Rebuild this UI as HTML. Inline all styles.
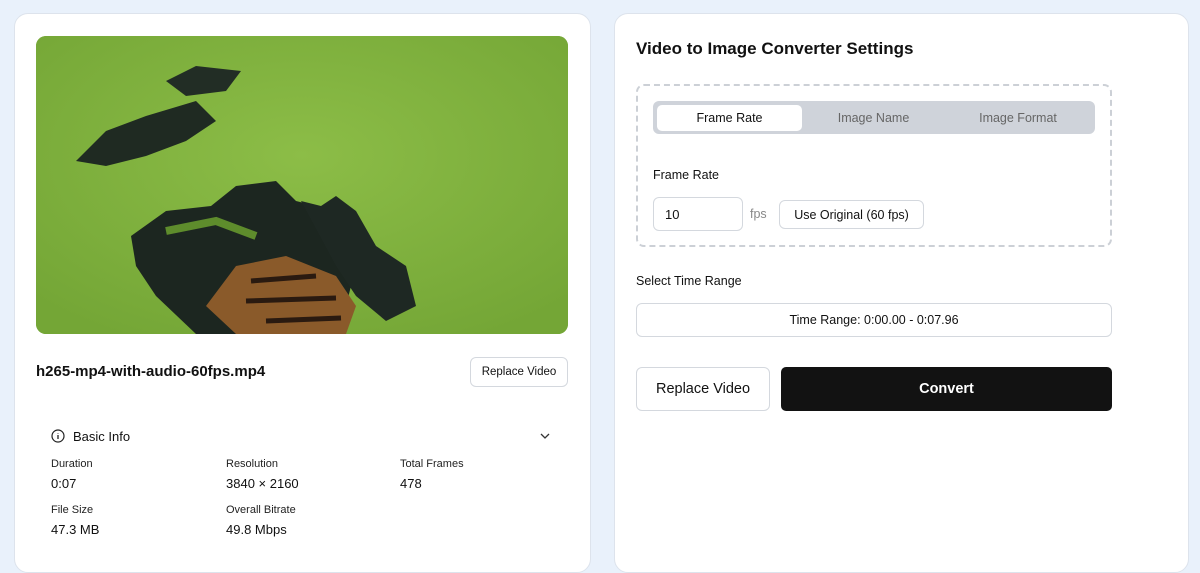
<!DOCTYPE html>
<html><head><meta charset="utf-8"><style>
*{box-sizing:border-box;margin:0;padding:0}
body{width:1200px;height:550px;overflow:hidden;background:#e9f1fb;font-family:"Liberation Sans",sans-serif;color:#111;position:relative}
.card{position:absolute;background:#fff;border:1px solid #dde3ec;border-radius:14px}
.abs{position:absolute}
.btn{position:absolute;background:#fff;border:1px solid #d4d8de;border-radius:6px;display:flex;align-items:center;justify-content:center;font-size:13px}
.lbl{font-size:11px;color:#222}
.val{font-size:13px;color:#111}
</style></head><body>
<div class="card" style="left:14px;top:13px;width:577px;height:560px"></div>
<div class="card" style="left:614px;top:13px;width:575px;height:560px"></div>

<div class="abs" style="left:36px;top:36px;width:532px;height:298px;border-radius:10px;overflow:hidden;background:#79a83a">
<svg width="532" height="298" viewBox="0 0 532 298">
<defs><radialGradient id="g" cx="50%" cy="40%" r="70%"><stop offset="0" stop-color="#8cbd47"/><stop offset="1" stop-color="#74a636"/></radialGradient></defs>
<rect width="532" height="298" fill="url(#g)"/>
<path d="M40 125 L70 95 L110 80 L160 65 L180 85 L150 105 L110 120 L70 130 Z" fill="#1f2a22"/>
<path d="M130 45 L160 30 L205 35 L190 55 L150 60 Z" fill="#222d25"/>
<path d="M95 200 L130 175 L175 170 L200 150 L240 145 L260 165 L300 175 L285 200 L320 230 L310 270 L290 298 L160 298 L120 260 L100 230 Z" fill="#1c2620"/>
<path d="M265 165 L285 170 L300 160 L320 175 L340 210 L370 230 L380 270 L350 285 L320 260 L300 230 Z" fill="#1e2823"/>
<path d="M200 230 L250 220 L300 240 L320 270 L310 298 L200 298 L170 270 Z" fill="#8a5a2a"/>
<path d="M215 245 L280 240 M210 265 L300 262 M230 285 L305 282" stroke="#2a1a10" stroke-width="5"/>
<path d="M130 195 L180 185 L220 200" stroke="#5e8c2c" stroke-width="8" fill="none"/>
</svg></div>

<div class="abs" style="left:36px;top:363px;font-size:15px;font-weight:bold">h265-mp4-with-audio-60fps.mp4</div>
<div class="btn" style="left:470px;top:357px;width:98px;height:30px;font-size:11.5px">Replace Video</div>

<svg class="abs" style="left:51px;top:429px" width="14" height="14" viewBox="0 0 14 14"><circle cx="7" cy="7" r="6" fill="none" stroke="#222" stroke-width="1.2"/><path d="M7 6v4M7 4v.5" stroke="#222" stroke-width="1.3"/></svg>
<div class="abs" style="left:73px;top:429px;font-size:13px">Basic Info</div>
<svg class="abs" style="left:540px;top:432px" width="10" height="8" viewBox="0 0 10 8"><path d="M1 2l4 4 4-4" fill="none" stroke="#333" stroke-width="1.3"/></svg>

<div class="abs lbl" style="left:51px;top:458px">Duration</div>
<div class="abs val" style="left:51px;top:476px">0:07</div>
<div class="abs lbl" style="left:226px;top:458px">Resolution</div>
<div class="abs val" style="left:226px;top:476px">3840 × 2160</div>
<div class="abs lbl" style="left:400px;top:458px">Total Frames</div>
<div class="abs val" style="left:400px;top:476px">478</div>
<div class="abs lbl" style="left:51px;top:504px">File Size</div>
<div class="abs val" style="left:51px;top:522px">47.3 MB</div>
<div class="abs lbl" style="left:226px;top:504px">Overall Bitrate</div>
<div class="abs val" style="left:226px;top:522px">49.8 Mbps</div>

<div class="abs" style="left:636px;top:39px;font-size:17px;font-weight:bold">Video to Image Converter Settings</div>
<div class="abs" style="left:636px;top:84px;width:476px;height:163px;border:2px dashed #ccd0d6;border-radius:8px"></div>
<div class="abs" style="left:653px;top:101px;width:442px;height:33px;background:#cfd3da;border-radius:6px"></div>
<div class="abs" style="left:657px;top:105px;width:145px;height:26px;background:#fff;border-radius:5px;display:flex;align-items:center;justify-content:center;font-size:12.5px">Frame Rate</div>
<div class="abs" style="left:802px;top:105px;width:143px;height:26px;display:flex;align-items:center;justify-content:center;font-size:12.5px;color:#666">Image Name</div>
<div class="abs" style="left:945px;top:105px;width:146px;height:26px;display:flex;align-items:center;justify-content:center;font-size:12.5px;color:#666">Image Format</div>

<div class="abs" style="left:653px;top:168px;font-size:12.5px">Frame Rate</div>
<div class="btn" style="left:653px;top:197px;width:90px;height:34px;justify-content:flex-start;padding-left:11px">10</div>
<div class="abs" style="left:750px;top:207px;font-size:12.5px;color:#888">fps</div>
<div class="btn" style="left:779px;top:200px;width:145px;height:29px;font-size:12.5px">Use Original (60 fps)</div>

<div class="abs" style="left:636px;top:274px;font-size:12.5px">Select Time Range</div>
<div class="btn" style="left:636px;top:303px;width:476px;height:34px;font-size:12.5px">Time Range: 0:00.00 - 0:07.96</div>

<div class="btn" style="left:636px;top:367px;width:134px;height:44px;font-size:14.5px">Replace Video</div>
<div class="abs" style="left:781px;top:367px;width:331px;height:44px;background:#121212;border-radius:5px;color:#fff;font-weight:bold;font-size:14.5px;display:flex;align-items:center;justify-content:center">Convert</div>
</body></html>
